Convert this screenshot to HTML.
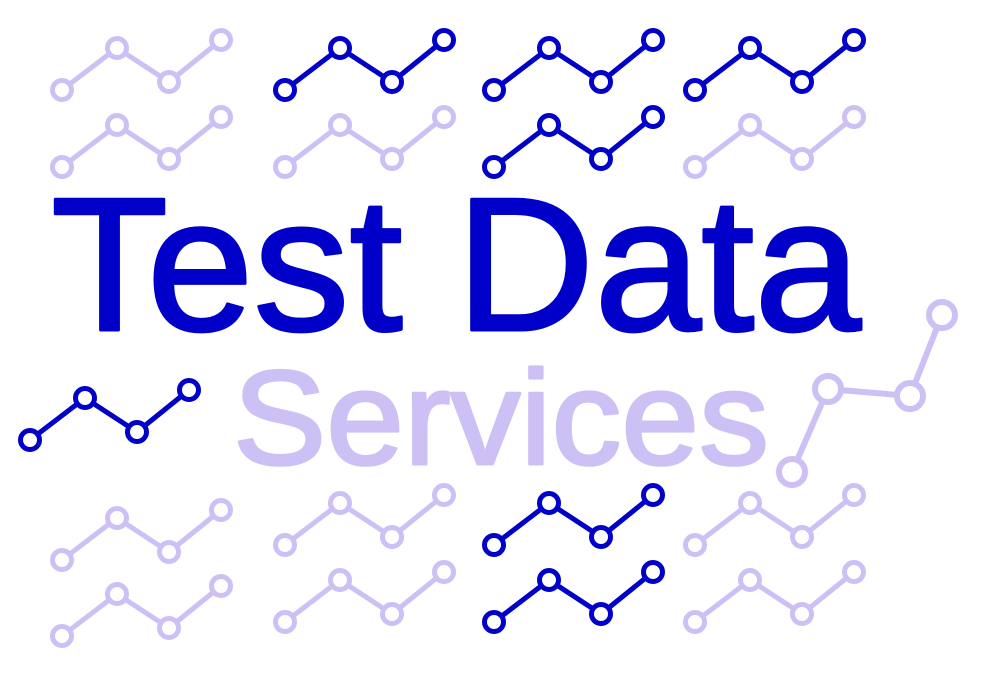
<!DOCTYPE html>
<html><head><style>html,body{margin:0;padding:0;background:#fff;width:1000px;height:700px;overflow:hidden}</style></head>
<body>
<svg width="1000" height="700" viewBox="0 0 1000 700" xmlns="http://www.w3.org/2000/svg">
<defs>
<g id="ic" fill="#fff" stroke-width="5" stroke-linejoin="round">
<polyline points="0,0 55,-42 107,-8 159,-50" fill="none"/>
<circle cx="0" cy="0" r="9.5"/><circle cx="55" cy="-42" r="9.5"/><circle cx="107" cy="-8" r="9.5"/><circle cx="159" cy="-50" r="9.5"/>
</g>
</defs>
<g stroke="#cdc0f5">
<use href="#ic" x="62" y="90"/>
<use href="#ic" x="62" y="167"/>
<use href="#ic" x="285" y="167"/>
<use href="#ic" x="695" y="167"/>
<use href="#ic" x="62" y="560"/>
<use href="#ic" x="62" y="636"/>
<use href="#ic" x="285" y="545"/>
<use href="#ic" x="285" y="622"/>
<use href="#ic" x="695" y="545"/>
<use href="#ic" x="695" y="622"/>
</g>
<g stroke="#0000c8">
<use href="#ic" x="285" y="90"/>
<use href="#ic" x="494" y="90"/>
<use href="#ic" x="695" y="90"/>
<use href="#ic" x="494" y="167"/>
<use href="#ic" x="30" y="440"/>
<use href="#ic" x="494" y="545"/>
<use href="#ic" x="494" y="622"/>
</g>
<g stroke="#cdc0f5" stroke-width="6" fill="#fff">
<polyline points="792,472 828,389 910,396 942,315" fill="none"/>
<circle cx="792" cy="472" r="13"/><circle cx="828" cy="389" r="13"/><circle cx="910" cy="396" r="13"/><circle cx="942" cy="315" r="13"/>
</g>
<text x="51" y="330" font-family="Liberation Sans, sans-serif" font-size="190" fill="#0000c8" stroke="#0000c8" stroke-width="3" stroke-linejoin="round" textLength="810" lengthAdjust="spacingAndGlyphs">Test Data</text>
<text x="233" y="464" font-family="Liberation Sans, sans-serif" font-size="134" fill="#cdc0f5" stroke="#cdc0f5" stroke-width="3" stroke-linejoin="round" textLength="536" lengthAdjust="spacingAndGlyphs">Services</text>
</svg>
</body></html>
